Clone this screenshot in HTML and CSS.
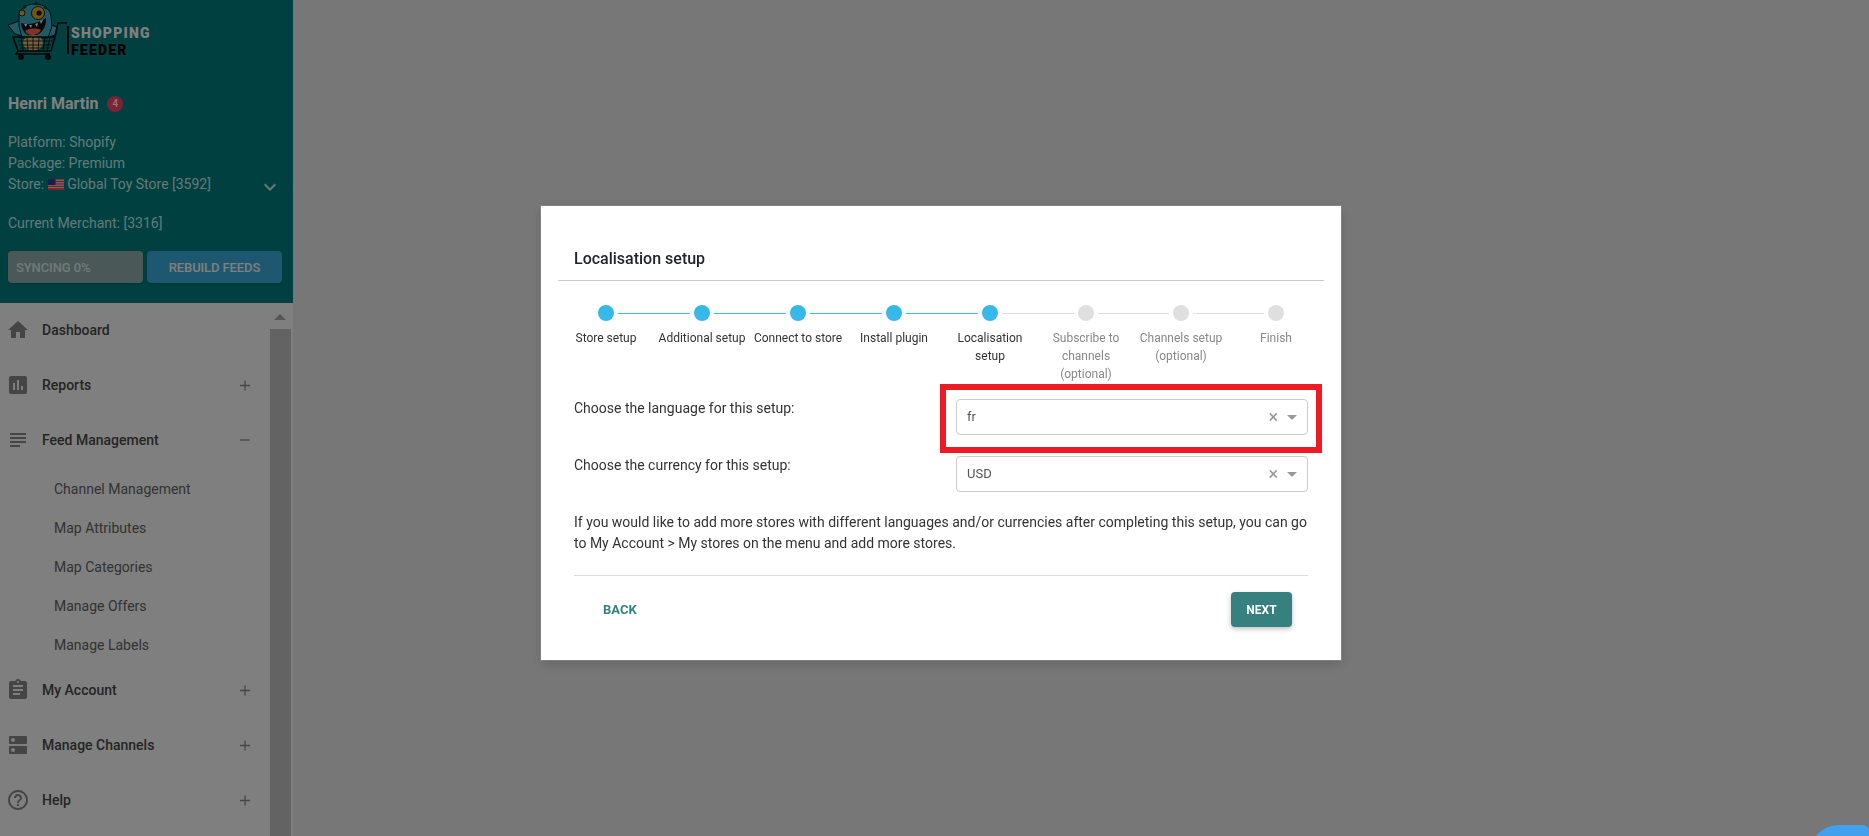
FILE: index.html
```html
<!DOCTYPE html>
<html lang="en">
  <head>
    <meta charset="UTF-8" />
    <title>Localisation setup</title>
    <link rel="stylesheet" href="styles.css">
  </head>
  <body>
    <div class="layout">
      <aside class="sidebar">
        <div class="account">
          <div class="logo">
            <svg class="logo-mark" width="67" height="62" viewBox="0 0 67 62">
              <!-- arms -->
              <path d="M8 25l11-4 8 8-1 8-11-3z" fill="#3fb4cc" stroke="#0b1a1c" />
              <path d="M57 27l-9-3-6 7 3 7 10-3z" fill="#3fb4cc" stroke="#0b1a1c" />
              <!-- head and body -->
              <path d="M19 17c0-8 7-13 16-13 9 0 15 5 16 12l1 10-4 12H22l-3-12z" fill="#3fb4cc" stroke="#0b1a1c" />
              <path d="M24 4l3 3-4 3zM36 1l3 4h-6zM46 5l2 5-5-2z" fill="#163c42" />
              <circle cx="22" cy="13" r="3" fill="#f0a820" stroke="#10282c" />
              <circle cx="38" cy="13" r="6.5" fill="#f0a820" stroke="#10282c" />
              <circle cx="39" cy="13" r="2.6" fill="#111" />
              <!-- mouth -->
              <path d="M21 23c8 2 16 1 25-5 1 10-6 18-14 18-6 0-10-5-11-13z" fill="#111" />
              <path d="M25 31c5-3 11-3 16-1-3 6-13 7-16 1z" fill="#ff6a50" />
              <path d="M24 24l2 3 1-3zM29 25l2 3 1-3zM35 24l2 3 1-4zM40 21l1 3 2-4z" fill="#fff" />
              <ellipse cx="33" cy="43" rx="10" ry="8" fill="#e4c27e" />
              <!-- cart -->
              <path d="M13 37h42l-4 14H18z M18 51l-2 3h34" fill="none" stroke="#0a0a0a" stroke-width="1.6" />
              <path d="M18 41h35M19 45h32M20 48h30M21 37l2 14M27 37l1 14M33 37v14M39 37l-1 14M45 37l-2 14M50 37l-3 14" stroke="#0a0a0a" stroke-width="0.8" fill="none" />
              <path d="M55 37l3-14h9" fill="none" stroke="#0a0a0a" stroke-width="1.6" />
              <circle cx="21" cy="57" r="3" fill="#0a0a0a" />
              <circle cx="48" cy="57" r="3" fill="#0a0a0a" />
            </svg>
            <div class="logo-text">
              <span class="logo-top">SHOPPING</span>
              <span class="logo-bottom">FEEDER</span>
            </div>
          </div>

          <div class="user-name">Henri Martin <span class="badge">4</span></div>

          <div class="info">
            <div>Platform: Shopify</div>
            <div>Package: Premium</div>
            <div class="store-row">
              <span class="store-name">
                Store:
                <svg class="flag" width="16" height="11" viewBox="0 0 16 11">
                  <rect width="16" height="11" fill="#fff" />
                  <path d="M0 .8h16M0 2.5h16M0 4.2h16M0 5.9h16M0 7.6h16M0 9.3h16M0 10.6h16" stroke="#e0202a" stroke-width=".9" />
                  <rect width="7.5" height="6" fill="#3c3b8e" />
                </svg>
                Global Toy Store [3592]
              </span>
              <svg class="chevron" width="24" height="24" viewBox="0 0 24 24">
                <path d="M7.41 8.59L12 13.17l4.59-4.58L18 10l-6 6-6-6z" />
              </svg>
            </div>
          </div>

          <div class="merchant">Current Merchant: [3316]</div>

          <div class="account-buttons">
            <button class="btn-sync">Syncing 0%</button>
            <button class="btn-rebuild">Rebuild feeds</button>
          </div>
        </div>

        <div class="nav-wrap">
          <nav class="menu">
            <div class="menu-item">
              <svg class="menu-icon" viewBox="0 0 24 24"><path d="M10 20v-6h4v6h5v-8h3L12 3 2 12h3v8z" /></svg>
              <span>Dashboard</span>
            </div>
            <div class="menu-item">
              <svg class="menu-icon" viewBox="0 0 24 24"><path d="M19 3H5c-1.1 0-2 .9-2 2v14c0 1.1.9 2 2 2h14c1.1 0 2-.9 2-2V5c0-1.1-.9-2-2-2zM9 17H7v-7h2v7zm4 0h-2V7h2v10zm4 0h-2v-4h2v4z" /></svg>
              <span>Reports</span>
              <svg class="toggle" viewBox="0 0 24 24"><path d="M7 12.5h10M12 7.5v10" /></svg>
            </div>
            <div class="menu-item">
              <svg class="menu-icon" viewBox="0 0 24 24"><path d="M14 17H4v2h10v-2zm6-8H4v2h16V9zM4 15h16v-2H4v2zM4 5v2h16V5H4z" /></svg>
              <span>Feed Management</span>
              <svg class="toggle" viewBox="0 0 24 24"><path d="M7 12h10" /></svg>
            </div>
            <div class="submenu">
              <div>Channel Management</div>
              <div>Map Attributes</div>
              <div>Map Categories</div>
              <div>Manage Offers</div>
              <div>Manage Labels</div>
            </div>
            <div class="menu-item">
              <svg class="menu-icon" viewBox="0 0 24 24"><path d="M19 3h-4.18C14.4 1.84 13.3 1 12 1c-1.3 0-2.4.84-2.82 2H5c-1.1 0-2 .9-2 2v14c0 1.1.9 2 2 2h14c1.1 0 2-.9 2-2V5c0-1.1-.9-2-2-2zm-7 0c.55 0 1 .45 1 1s-.45 1-1 1-1-.45-1-1 .45-1 1-1zm2 14H7v-2h7v2zm3-4H7v-2h10v2zm0-4H7V7h10v2z" /></svg>
              <span>My Account</span>
              <svg class="toggle" viewBox="0 0 24 24"><path d="M7 12.5h10M12 7.5v10" /></svg>
            </div>
            <div class="menu-item">
              <svg class="menu-icon" viewBox="0 0 24 24"><path d="M20 13H4c-.55 0-1 .45-1 1v6c0 .55.45 1 1 1h16c.55 0 1-.45 1-1v-6c0-.55-.45-1-1-1zM7 19c-1.1 0-2-.9-2-2s.9-2 2-2 2 .9 2 2-.9 2-2 2zM20 3H4c-.55 0-1 .45-1 1v6c0 .55.45 1 1 1h16c.55 0 1-.45 1-1V4c0-.55-.45-1-1-1zM7 9c-1.1 0-2-.9-2-2s.9-2 2-2 2 .9 2 2-.9 2-2 2z" /></svg>
              <span>Manage Channels</span>
              <svg class="toggle" viewBox="0 0 24 24"><path d="M7 12.5h10M12 7.5v10" /></svg>
            </div>
            <div class="menu-item">
              <svg class="menu-icon" viewBox="0 0 24 24"><path d="M11 18h2v-2h-2v2zm1-16C6.48 2 2 6.48 2 12s4.48 10 10 10 10-4.48 10-10S17.52 2 12 2zm0 18c-4.41 0-8-3.59-8-8s3.59-8 8-8 8 3.59 8 8-3.59 8-8 8zm0-14c-2.21 0-4 1.79-4 4h2c0-1.1.9-2 2-2s2 .9 2 2c0 2-3 1.75-3 5h2c0-2.25 3-2.5 3-5 0-2.21-1.79-4-4-4z" /></svg>
              <span>Help</span>
              <svg class="toggle" viewBox="0 0 24 24"><path d="M7 12.5h10M12 7.5v10" /></svg>
            </div>
          </nav>
          <div class="scrollbar">
            <div class="scroll-up"></div>
            <div class="scroll-thumb"></div>
          </div>
        </div>
      </aside>
      <main class="content"></main>
    </div>

    <div class="overlay">
      <div class="modal">
        <h2 class="modal-title">Localisation setup</h2>

        <div class="steps">
          <div class="step done">
            <div class="step-track"><i class="line hidden"></i><b class="dot"></b><i class="line"></i></div>
            <div class="step-label">Store setup</div>
          </div>
          <div class="step done">
            <div class="step-track"><i class="line"></i><b class="dot"></b><i class="line"></i></div>
            <div class="step-label">Additional setup</div>
          </div>
          <div class="step done">
            <div class="step-track"><i class="line"></i><b class="dot"></b><i class="line"></i></div>
            <div class="step-label">Connect to store</div>
          </div>
          <div class="step done">
            <div class="step-track"><i class="line"></i><b class="dot"></b><i class="line"></i></div>
            <div class="step-label">Install plugin</div>
          </div>
          <div class="step done current">
            <div class="step-track"><i class="line"></i><b class="dot"></b><i class="line"></i></div>
            <div class="step-label">Localisation setup</div>
          </div>
          <div class="step">
            <div class="step-track"><i class="line"></i><b class="dot"></b><i class="line"></i></div>
            <div class="step-label">Subscribe to channels (optional)</div>
          </div>
          <div class="step">
            <div class="step-track"><i class="line"></i><b class="dot"></b><i class="line"></i></div>
            <div class="step-label">Channels setup (optional)</div>
          </div>
          <div class="step">
            <div class="step-track"><i class="line"></i><b class="dot"></b><i class="line hidden"></i></div>
            <div class="step-label">Finish</div>
          </div>
        </div>

        <div class="modal-body">
          <div class="form-row">
            <label>Choose the language for this setup:</label>
            <div class="select">
              <span>fr</span>
              <span class="select-clear">×</span>
              <span class="select-arrow"></span>
              <div class="highlight"></div>
            </div>
          </div>
          <div class="form-row second">
            <label>Choose the currency for this setup:</label>
            <div class="select">
              <span>USD</span>
              <span class="select-clear">×</span>
              <span class="select-arrow"></span>
            </div>
          </div>

          <p class="note">If you would like to add more stores with different languages and/or currencies after completing this setup, you can go to My Account &gt; My stores on the menu and add more stores.</p>

          <div class="modal-footer">
            <button class="btn-back">Back</button>
            <button class="btn-next">Next</button>
          </div>
        </div>
      </div>
    </div>

    <div class="chat-bubble"></div>
  </body>
</html>
```

FILE: styles.css
```css
* {
  box-sizing: border-box;
}

body {
  margin: 0;
  height: 100vh;
  overflow: hidden;
  background: #eee;
  font-family: "Roboto", sans-serif;
  font-size: 14px;
  color: #212529;
}

.layout {
  display: flex;
  height: 100vh;
}

.sidebar {
  width: 293px;
  height: 100vh;
  display: flex;
  flex-direction: column;
  overflow: hidden;
  background: #fff;
}

.content {
  flex: 1;
}

/* account block */
.account {
  height: 303px;
  flex-shrink: 0;
  padding: 0 11px 0 8px;
  background: #008080;
  color: #c8f0f0;
  line-height: 21px;
}

.logo {
  display: flex;
  height: 65px;
  margin-left: -8px;
}

.logo-mark {
  flex-shrink: 0;
}

.logo-text {
  display: flex;
  flex-direction: column;
  margin-top: 26px;
  padding-left: 2px;
  border-left: 2px solid #000;
  height: 28px;
  font-weight: 900;
  font-size: 14px;
  letter-spacing: 1.2px;
  line-height: 16px;
}

.logo-top {
  margin-top: -1px;
  color: #fff;
}

.logo-bottom {
  margin-top: 1px;
  color: #000;
}

.user-name {
  margin-top: 27px;
  display: flex;
  align-items: center;
  gap: 9px;
  color: #fff;
  font-size: 16px;
  font-weight: 700;
  line-height: 24px;
}

.badge {
  width: 16px;
  height: 16px;
  border-radius: 50%;
  background: #ff4466;
  font-size: 10px;
  font-weight: 500;
  line-height: 16px;
  text-align: center;
  color: #fff;
}

.info {
  margin-top: 16px;
}

.store-row {
  display: flex;
  justify-content: space-between;
  align-items: center;
  height: 21px;
}

.flag {
  vertical-align: -1px;
}

.chevron {
  margin-top: 5px;
  fill: #d8f0f0;
}

.merchant {
  margin-top: 18px;
}

.account-buttons {
  display: flex;
  gap: 4px;
  margin-top: 17px;
}

.account-buttons button {
  width: 135px;
  height: 32px;
  border: none;
  border-radius: 4px;
  font-family: inherit;
  font-size: 13px;
  font-weight: 500;
  letter-spacing: -0.1px;
  text-transform: uppercase;
  box-shadow: 0 1px 2px rgba(0, 0, 0, 0.2);
}

.btn-sync {
  padding: 0 8px;
  text-align: left;
  background: #94b0ae;
  color: #e0f4f4;
}

.btn-rebuild {
  background: #3ab0e0;
  color: #fff;
}

/* menu */
.nav-wrap {
  flex: 1;
  display: flex;
  min-height: 0;
}

.menu {
  flex: 1;
}

.menu-item {
  display: flex;
  align-items: center;
  height: 55px;
  padding: 0 13px 2px 6px;
  font-weight: 500;
  color: #4a4a4a;
}

.menu-icon {
  width: 24px;
  height: 24px;
  margin-right: 12px;
  fill: #8a8a8a;
}

.toggle {
  width: 24px;
  height: 24px;
  margin-left: auto;
  fill: none;
  stroke: #8a8a8a;
  stroke-width: 1.3;
}

.submenu {
  padding-top: 2px;
  padding-left: 54px;
  margin-bottom: -2px;
  color: #666;
}

.submenu div {
  height: 39px;
  line-height: 39px;
}

.scrollbar {
  width: 23px;
  display: flex;
  flex-direction: column;
  padding-right: 2px;
}

.scroll-up {
  height: 26px;
  position: relative;
}

.scroll-up::after {
  content: "";
  position: absolute;
  left: 4px;
  top: 11px;
  border-left: 6px solid transparent;
  border-right: 6px solid transparent;
  border-bottom: 6px solid #aaa;
}

.scroll-thumb {
  flex: 1;
  background: #c6c6c6;
}

/* dim layer and wizard */
.overlay {
  position: fixed;
  top: 0;
  left: 0;
  right: 0;
  bottom: 0;
  padding: 206px 0 0 541px;
  background: rgba(0, 0, 0, 0.5);
}

.modal {
  width: 800px;
  height: 454px;
  background: #fff;
  box-shadow: 0 0 0 1px rgba(255, 255, 255, 0.12), 0 4px 12px rgba(0, 0, 0, 0.15);
}

.modal-title {
  margin: 0 17px;
  padding: 41px 16px 9px;
  border-bottom: 1px solid #ccc;
  font-size: 16px;
  font-weight: 500;
  line-height: 24px;
  height: 75px;
  color: #212529;
}

.steps {
  display: grid;
  grid-template-columns: repeat(6, 96px) 94px 96px;
  margin: 0 17px;
  padding-top: 24px;
  height: 102px;
}

.step-track {
  display: flex;
  align-items: center;
}

.line {
  flex: 1;
  height: 1px;
  background: #ddd;
}

.line:first-child {
  margin-right: 4px;
}

.line:last-child {
  margin-left: 4px;
}

.line.hidden {
  visibility: hidden;
}

.dot {
  width: 16px;
  height: 16px;
  border-radius: 50%;
  background: #dfdfdf;
}

.step.done .line,
.step.done .dot {
  background: #36b8ea;
}

.step.current .line:last-child {
  background: #ddd;
}

.step-label {
  margin-top: 8px;
  padding: 0 1px;
  font-size: 12px;
  line-height: 18px;
  text-align: center;
  color: #888;
}

.step.done .step-label {
  color: #333;
}

.modal-body {
  padding: 16px 33px 0;
}

.form-row {
  display: grid;
  grid-template-columns: 382px 352px;
}

.form-row.second {
  margin-top: 21px;
}

.form-row label {
  margin-top: -1px;
  line-height: 21px;
  color: #333;
}

.select {
  position: relative;
  display: flex;
  align-items: center;
  height: 36px;
  padding: 0 0 2px 10px;
  border: 1px solid #ccc;
  border-radius: 4px;
  font-size: 13px;
  color: #555;
}

.select-clear {
  margin-left: auto;
  margin-right: 9px;
  font-size: 18px;
  color: #999;
}

.select-arrow {
  margin-top: 3px;
  margin-right: 10px;
  border-left: 5px solid transparent;
  border-right: 5px solid transparent;
  border-top: 5px solid #999;
}

/* red marker drawn on the screenshot */
.highlight {
  position: absolute;
  top: -16px;
  left: -17px;
  right: -15px;
  bottom: -19px;
  border: 6px solid #ed1c24;
}

.note {
  margin: 20px 0 21px;
  line-height: 21px;
  color: #333;
}

.modal-footer {
  display: flex;
  justify-content: space-between;
  align-items: center;
  margin-top: 0;
  padding: 16px 16px 0;
  border-top: 1px solid #ddd;
}

.modal-footer button {
  height: 35px;
  border: none;
  border-radius: 4px;
  font-family: inherit;
  font-size: 12px;
  font-weight: 700;
  text-transform: uppercase;
}

.modal-footer .btn-back {
  padding: 0 13px;
  background: none;
  font-size: 13px;
  color: #36807f;
}

.btn-next {
  width: 61px;
  background: #36807f;
  color: #fff;
  box-shadow: 0 2px 5px rgba(0, 0, 0, 0.25);
}

.chat-bubble {
  position: fixed;
  right: 0;
  bottom: -49px;
  width: 60px;
  height: 60px;
  border-radius: 30px 6px 0 0;
  background: #42a0ec;
}
```
